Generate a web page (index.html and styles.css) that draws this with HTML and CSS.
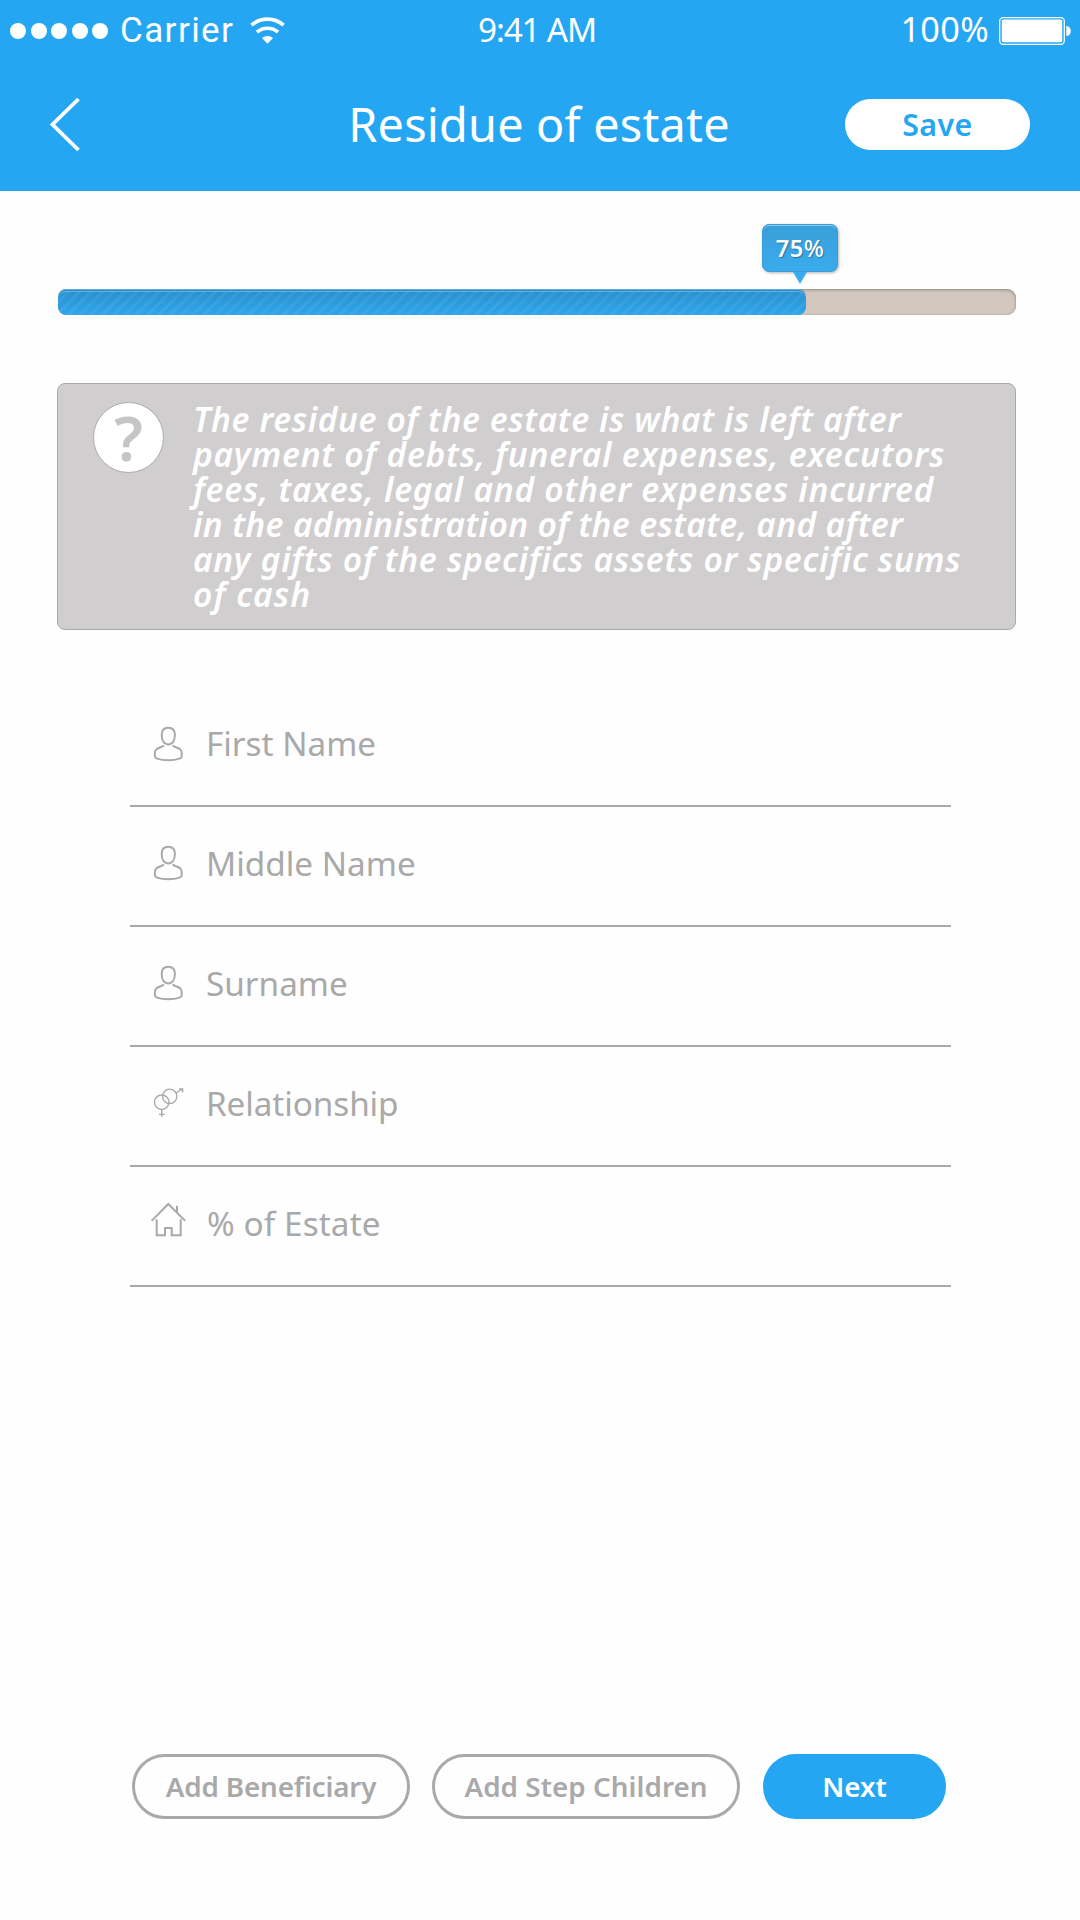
FILE: index.html
```html
<!DOCTYPE html>
<html lang="en">
<head>
<meta charset="utf-8">
<title>Residue of estate</title>
<link rel="stylesheet" href="styles.css">
</head>
<body>
<svg class="symbols" aria-hidden="true">
  <symbol id="person" viewBox="0 0 35 40">
    <path d="M17.3 4.800c-4.300 0-6.600 2.600-6.600 7 0 5.600 2.500 9.600 6.600 9.600s6.600-4 6.600-9.600c0-4.400-2.300-7-6.600-7z"/>
    <path d="M13 22.500c-1.700 1.500-6 2.400-7.500 3.700C4.200 27.300 3.900 28.600 3.900 30v3.200c0 1.400.8 1.900 2.200 2.400 6.500 2.300 15.900 2.300 22.400 0 1.400-.5 2.200-1 2.200-2.400V30c0-1.400-.3-2.700-1.600-3.800-1.500-1.300-5.800-2.200-7.500-3.700"/>
  </symbol>
</svg>
<div class="screen">
  <header class="header">
    <div class="status">
      <div class="status-left">
        <span class="signal"><i></i><i></i><i></i><i></i><i></i></span>
        <span class="carrier">Carrier</span>
        <svg class="wifi" width="35" height="27" viewBox="0 0 35 27">
          <g fill="none" stroke="#fff" stroke-width="3.600">
            <path d="M1.400 8.200a24.500 24.500 0 0 1 32.200 0"/>
            <path d="M7 15.200a16 16 0 0 1 21 0"/>
          </g>
          <path fill="#fff" d="M12 21a8.500 8.500 0 0 1 11 0l-5.500 5.800z"/>
        </svg>
      </div>
      <span class="time">9:41 AM</span>
      <div class="status-right">
        <span class="charge">100%</span>
        <svg width="72" height="28" viewBox="0 0 72 28">
          <rect x=".7" y=".7" width="64.600" height="26.600" rx="3.500" fill="none" stroke="#fff" stroke-width="1.300"/>
          <rect x="2.800" y="2.600" width="60.400" height="22.600" rx="1.500" fill="#fff"/>
          <path fill="#fff" d="M67.300 9c2.600 0 4.500 2 4.500 5s-1.900 5-4.500 5z"/>
        </svg>
      </div>
    </div>
    <nav class="nav">
      <svg class="back" width="32" height="56" viewBox="0 0 32 56">
        <path d="M28.500 2 2.500 27.500l26 25.500" fill="none" stroke="#fff" stroke-width="3.800"/>
      </svg>
      <h1 class="title">Residue of estate</h1>
      <button class="save">Save</button>
    </nav>
  </header>

  <main class="content">
    <div class="progress">
      <div class="progress-fill" style="width: 78.1%"></div>
      <div class="tooltip">75<span class="percent">%</span></div>
    </div>

    <section class="info">
      <span class="help">?</span>
      <p class="info-text">
        <span>The residue of the estate is what is left after</span>
        <span>payment of debts, funeral expenses, executors</span>
        <span>fees, taxes, legal and other expenses incurred</span>
        <span>in the administration of the estate, and after</span>
        <span>any gifts of the specifics assets or specific sums</span>
        <span>of cash</span>
      </p>
    </section>

    <div class="form">
      <label class="field"><svg class="icon first" viewBox="0 0 35 40"><use href="#person"/></svg>First Name</label>
      <label class="field"><svg class="icon" viewBox="0 0 35 40"><use href="#person"/></svg>Middle Name</label>
      <label class="field surname"><svg class="icon" viewBox="0 0 35 40"><use href="#person"/></svg>Surname</label>
      <label class="field relationship">
        <svg class="icon thin" viewBox="0 0 35 40">
          <circle cx="10.700" cy="20.200" r="7.200"/><circle cx="18.700" cy="14.300" r="7.200"/>
          <path d="M10.700 27.400v7.300M8 32.400h5.500M24.800 11l6.700-4M28 6.900h3.600v3.600"/>
        </svg>Relationship</label>
      <label class="field estate">
        <svg class="icon" viewBox="0 0 35 40">
          <path d="M.6 18.900 17.300 2l16.900 16.900M26 3.700V10.500M5.700 17.300v16H14v-7.200h6.700v7.200h9v-16"/>
        </svg>% of Estate</label>
    </div>

    <div class="actions">
      <button class="btn outline beneficiary">Add Beneficiary</button>
      <button class="btn outline step">Add Step Children</button>
      <button class="btn next">Next</button>
    </div>
  </main>
</div>
</body>
</html>
```
FILE: styles.css
```css
* { box-sizing: border-box; margin: 0; padding: 0; }

body {
  background: #fefefe;
  font-family: "Noto Sans", "Open Sans", sans-serif;
}

button { border: 0; font-family: inherit; }

.symbols { position: absolute; width: 0; height: 0; }

.screen {
  display: flex;
  flex-direction: column;
  width: 1080px;
  height: 1920px;
}

/* Header */
.header { height: 191px; background: #24a6f2; color: #fff; }

.status {
  display: grid;
  grid-template-columns: 1fr auto 1fr;
  align-items: center;
  height: 61px;
  padding: 0 9px 0 10px;
}

.status-left, .status-right { display: flex; align-items: center; }
.status-right { justify-content: flex-end; gap: 10px; }

.signal { display: flex; gap: 4.500px; }
.signal i { width: 16px; height: 16px; border-radius: 50%; background: #fff; }

.carrier {
  margin-left: 12px;
  font-family: "Roboto", sans-serif;
  font-size: 35px;
  font-weight: 400;
  letter-spacing: 1.400px;
}

.wifi { margin-left: 16px; }

.time { padding: 0 7px 3px 0; font-size: 33.300px; letter-spacing: -1.200px; line-height: 50px; }
.charge { padding-bottom: 3px; font-size: 34.300px; letter-spacing: .3px; line-height: 50px; }

.nav {
  display: grid;
  grid-template-columns: 185px 1fr 185px;
  align-items: center;
  height: 130px;
  padding: 0 50px 3px;
}

.title {
  padding: 0 2px 1px 0;
  text-align: center;
  font-size: 46.800px;
  font-weight: 400;
  letter-spacing: .2px;
  line-height: 60px;
}

.save {
  height: 51px;
  padding-bottom: 1px;
  border-radius: 26px;
  background: #fff;
  color: #24a6f2;
  font-size: 30.300px;
  font-weight: 600;
  letter-spacing: .5px;
}

/* Content */
.content { display: flex; flex: 1; flex-direction: column; padding: 98px 64px 101px 57px; }

.progress {
  position: relative;
  height: 26px;
  margin-left: 1px;
  border-radius: 9px;
  background: #d1c7be;
  box-shadow: inset 0 1px 3px rgba(90, 75, 65, .5), inset 0 0 1px rgba(90, 75, 65, .4);
}

.progress-fill {
  height: 26px;
  border-radius: 8px;
  background:
    repeating-linear-gradient(135deg, rgba(255, 255, 255, .06) 0 3px, transparent 3px 8px),
    linear-gradient(#2a8fce, #2fa5eb);
  box-shadow: inset 0 1px #5fabdc, inset 0 2px #2c8dca, inset 0 3px #65b0df;
}

.tooltip {
  position: absolute;
  top: -65px;
  left: 704px;
  width: 76px;
  height: 48px;
  border-radius: 8px;
  background: linear-gradient(#399fd9, #3aabee);
  box-shadow: inset 0 0 0 1px #3a9bd6, inset 0 2px #8fcbee, 1px 1px 3px rgba(0, 0, 0, .3);
  color: #fff;
  font-size: 23.600px;
  font-weight: 600;
  letter-spacing: .4px;
  line-height: 49px;
  text-align: center;
  text-shadow: 1px 1px 1px rgba(0, 0, 0, .3);
}

.tooltip::after {
  content: "";
  position: absolute;
  top: 48px;
  left: 31px;
  border: solid transparent;
  border-width: 12px 7px 0;
  border-top-color: #3aabee;
}

.percent { font-weight: 500; }

.info {
  display: flex;
  gap: 29px;
  height: 247px;
  margin-top: 68px;
  padding: 16px 0 0 35px;
  border: 1px solid #a9a9aa;
  border-radius: 8px;
  background: #d0cecf;
}

.help {
  width: 71px;
  height: 71px;
  margin-top: 2px;
  border: 1px solid #adadae;
  border-radius: 50%;
  background: #fff;
  color: #c6c5c6;
  font-size: 62px;
  font-weight: 600;
  line-height: 68px;
  text-align: center;
}

.info-text {
  padding-top: 2px;
  color: #fff;
  font-size: 33.500px;
  font-style: italic;
  font-weight: 600;
  letter-spacing: .6px;
  line-height: 35px;
  white-space: nowrap;
}

.info-text span { display: block; }
.info-text span:nth-child(2), .info-text span:nth-child(3) { letter-spacing: .76px; }
.info-text span:nth-child(4) { letter-spacing: .36px; }
.info-text span:nth-child(5) { letter-spacing: .7px; }
.info-text span:nth-child(6) { letter-spacing: 1.100px; }

/* Form */
.form { width: 821px; margin: 57px 0 0 73px; }

.field {
  display: flex;
  align-items: center;
  gap: 20px;
  height: 120px;
  padding: 1px 0 7px 21px;
  border-bottom: 2px solid #a9a9aa;
  color: #a9a9aa;
  font-size: 33.300px;
  letter-spacing: 0;
}

.icon {
  width: 35px;
  height: 40px;
  margin-top: -3px;
  overflow: visible;
  fill: none;
  stroke: #a9a9aa;
  stroke-width: 2;
}

.icon.first { margin-top: -1px; }
.icon.thin { stroke-width: 1.400; }
.relationship { letter-spacing: -.1px; }
.estate { gap: 21px; letter-spacing: .1px; }

/* Bottom actions */
.actions { display: flex; margin: auto 0 0 75px; }

.btn {
  height: 65px;
  padding-bottom: 1px;
  border-radius: 33px;
  font-size: 27.800px;
  font-weight: 600;
}

.outline { border: 3px solid #a9a9aa; background: transparent; color: #a9a9aa; }
.beneficiary { width: 278px; letter-spacing: -.15px; }
.step { width: 308px; margin-left: 22px; letter-spacing: .05px; }
.next { width: 183px; margin-left: 23px; background: #24a6f2; color: #fff; }
```
